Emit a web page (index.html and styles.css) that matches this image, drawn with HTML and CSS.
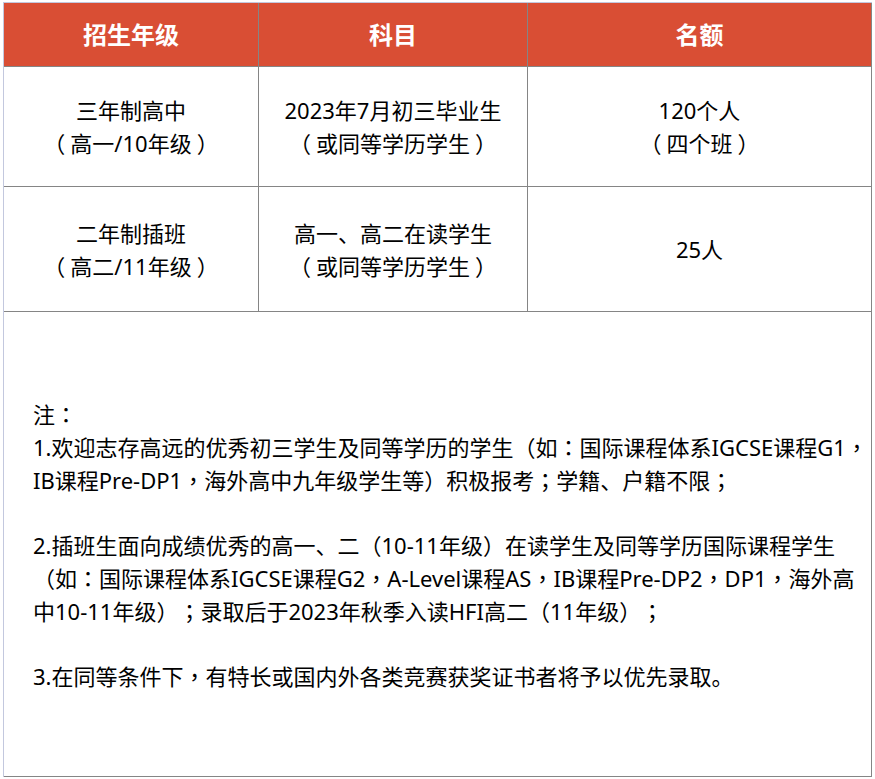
FILE: index.html
```html
<!DOCTYPE html>
<html lang="zh-CN">
<head>
<meta charset="utf-8">
<title>招生计划</title>
<link rel="stylesheet" href="styles.css">
</head>
<body>
<div class="sheet">
  <div class="grid">
    <div class="cell head">招生年级</div>
    <div class="cell head">科目</div>
    <div class="cell head">名额</div>

    <div class="cell"><span>三年制高中</span><span><i class="o" lang="zh-Hant">（</i>高一/10年级<i class="c" lang="zh-Hant">）</i></span></div>
    <div class="cell"><span>2023年7月初三毕业生</span><span><i class="o" lang="zh-Hant">（</i>或同等学历学生<i class="c" lang="zh-Hant">）</i></span></div>
    <div class="cell"><span>120个人</span><span><i class="o" lang="zh-Hant">（</i>四个班<i class="c" lang="zh-Hant">）</i></span></div>

    <div class="cell"><span>二年制插班</span><span><i class="o" lang="zh-Hant">（</i>高二/11年级<i class="c" lang="zh-Hant">）</i></span></div>
    <div class="cell"><span>高一、高二在读学生</span><span><i class="o" lang="zh-Hant">（</i>或同等学历学生<i class="c" lang="zh-Hant">）</i></span></div>
    <div class="cell"><span>25人</span></div>

    <div class="cell notes">
      <p>注<i lang="zh-Hant">：</i></p>
      <p>1.欢迎志存高远的优秀初三学生及同等学历的学生<i lang="zh-Hant">（</i>如<i lang="zh-Hant">：</i>国际课程体系IGCSE课程G1<i lang="zh-Hant">，</i></p>
      <p>IB课程Pre-DP1<i lang="zh-Hant">，</i>海外高中九年级学生等<i lang="zh-Hant">）</i>积极报考<i lang="zh-Hant">；</i>学籍、户籍不限<i lang="zh-Hant">；</i></p>
      <p class="blank">&nbsp;</p>
      <p>2.插班生面向成绩优秀的高一、二<i lang="zh-Hant">（</i>10-11年级<i lang="zh-Hant">）</i>在读学生及同等学历国际课程学生</p>
      <p><i lang="zh-Hant">（</i>如<i lang="zh-Hant">：</i>国际课程体系IGCSE课程G2<i lang="zh-Hant">，</i>A-Level课程AS<i lang="zh-Hant">，</i>IB课程Pre-DP2<i lang="zh-Hant">，</i>DP1<i lang="zh-Hant">，</i>海外高</p>
      <p>中10-11年级<i lang="zh-Hant">）；</i>录取后于2023年秋季入读HFI高二<i lang="zh-Hant">（</i>11年级<i lang="zh-Hant">）；</i></p>
      <p class="blank">&nbsp;</p>
      <p>3.在同等条件下<i lang="zh-Hant">，</i>有特长或国内外各类竞赛获奖证书者将予以优先录取。</p>
    </div>
  </div>
</div>
</body>
</html>
```

FILE: styles.css
```css
html, body {
  margin: 0;
  padding: 0;
  background: #ffffff;
}

body {
  font-family: "Noto Sans", "Noto Sans CJK SC", sans-serif;
  color: #000000;
  text-spacing-trim: space-all;
}

.sheet {
  padding: 2px 0 0 3px;
}

.grid {
  display: grid;
  grid-template-columns: 255px 269px 344px;
  grid-template-rows: 64px 120px 125px 465px;
  width: max-content;
  border-left: 1px solid #c3c8de;
  border-top: 1px solid #c3c8de;
}

.cell {
  box-sizing: border-box;
  border-right: 1px solid #858585;
  border-bottom: 1px solid #858585;
  display: flex;
  flex-direction: column;
  align-items: center;
  justify-content: center;
  text-align: center;
  font-size: 22px;
  line-height: 32px;
  white-space: nowrap;
}

.cell i {
  font-style: normal;
  font-family: "Noto Sans CJK TC", sans-serif;
  font-feature-settings: "halt" 0, "chws" 0, "palt" 0;
}

.cell i.o {
  padding-right: 5px;
}

.cell i.c {
  padding-left: 5px;
}

.head {
  background: #d94e34;
  color: #ffffff;
  font-weight: bold;
  font-size: 24px;
}

.notes {
  grid-column: 1 / 4;
  align-items: flex-start;
  text-align: left;
  padding-left: 29px;
}

.notes p {
  margin: 0;
}
```
